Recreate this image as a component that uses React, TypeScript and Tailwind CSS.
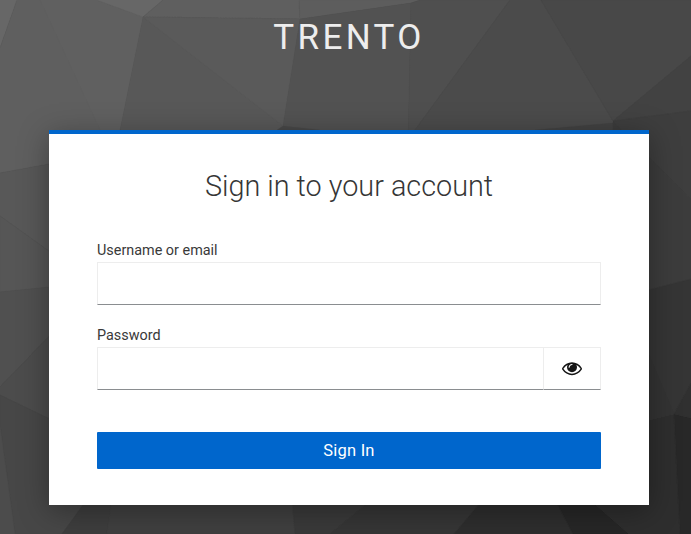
const facets: [string, string][] = [
  ['0,0 17,0 0,48', '#676767'],
  ['17,0 97,0 143,17 120,130 116,152 0,173 0,48', '#5f5f5f'],
  ['40,0 97,0 143,17 120,130 100,130', '#606060'],
  ['97,0 163,0 143,17', '#676767'],
  ['163,0 299,0 300,19 143,17', '#5f5f5f'],
  ['143,17 300,19 283,126 283,150 116,150', '#585858'],
  ['143,17 300,19 283,126', '#5a5a5a'],
  ['299,0 420,0 411,3 300,19', '#5d5d5d'],
  ['300,19 411,3 408,150 283,150 283,126', '#525252'],
  ['411,3 420,0 510,0 415,130 415,150 408,150', '#4f4f4f'],
  ['510,0 541,0 613,121 613,150 415,150 415,130', '#4b4b4b'],
  ['541,0 691,0 691,56 613,121', '#484848'],
  ['613,121 691,56 691,111', '#424242'],
  ['283,126 320,130 320,150 270,150 277,130', '#484848'],
  ['535,130 613,123 613,150 535,150', '#424242'],
  ['613,121 691,111 691,200', '#3e3e3e'],
  ['613,121 691,200 691,279 613,299', '#3c3c3c'],
  ['0,173 60,162 60,259 0,216', '#585858'],
  ['0,216 60,259 60,286 0,292', '#565656'],
  ['0,292 60,286 60,325 0,387', '#505050'],
  ['0,387 60,325 60,424 0,395', '#4c4c4c'],
  ['0,395 60,424 100,484 62,534 15,534 0,425', '#474747'],
  ['0,425 15,534 0,534', '#4c4c4c'],
  ['62,534 98,484 114,484 107,534', '#3e3e3e'],
  ['107,534 114,484 291,484 295,534', '#404040'],
  ['291,484 391,484 330,534 295,534', '#3a3a3a'],
  ['330,534 391,484 496,484 454,534', '#363636'],
  ['454,534 496,484 547,484 573,534', '#2e2e2e'],
  ['573,534 547,484 572,484 629,534', '#272727'],
  ['572,484 649,420 674,414 680,534 629,534', '#2e2e2e'],
  ['674,414 691,418 691,534 680,534', '#282828'],
  ['613,299 691,279 691,383 674,414 613,429', '#353535'],
  ['649,355 674,414 649,420', '#333333'],
  ['691,383 674,414 691,418', '#303030'],
];

function Backdrop() {
  return (
    <svg className="absolute inset-0 h-full w-full" viewBox="0 0 691 534" aria-hidden="true">
      <rect width="691" height="534" fill="#454545" />
      {facets.map(([points, fill]) => (
        <polygon key={points} points={points} fill={fill} stroke={fill} strokeWidth="0.3" />
      ))}
    </svg>
  );
}

function EyeIcon() {
  return (
    <svg
      className="mb-0.5 h-5 w-5 overflow-visible"
      viewBox="0 0 1792 1792"
      fill="currentColor"
      aria-hidden="true"
    >
      <path d="M1664 960q-152-236-381-353 61 104 61 225 0 185-131.500 316.500t-316.500 131.500-316.500-131.500-131.500-316.500q0-121 61-225-229 117-381 353 133 205 333.500 326.500t434.500 121.500 434.500-121.500 333.500-326.500zm-720-384q0-20-14-34t-34-14q-125 0-214.500 89.500t-89.500 214.500q0 20 14 34t34 14 34-14 14-34q0-86 61-147t147-61q20 0 34-14t14-34zm848 384q0 34-20 69-140 230-376.500 368.500t-499.500 138.500-499.500-139-376.500-368q-20-35-20-69t20-69q140-229 376.500-368t499.500-139 499.500 139 376.500 368q20 35 20 69z" />
    </svg>
  );
}

const inputStyle =
  'h-[43px] min-w-0 flex-1 border border-[#ededed] border-b-[#8a8d90] bg-white px-2 text-base text-[#151515] outline-none';

export default function App() {
  return (
    <div className="relative h-[534px] w-full overflow-hidden bg-[#454545] font-['Roboto',sans-serif]">
      <Backdrop />
      <div className="relative flex flex-col">
        <header className="flex h-[130px] justify-center pt-3">
          <h1 className="pl-[7px] text-[35px] leading-[52px] tracking-[3.4px] text-[#ededed]">TRENTO</h1>
        </header>
        <main className="ml-[49px] h-[375px] w-[600px] border-t-4 border-[#0066cc] bg-white px-12 shadow-[0_6px_28px_rgba(3,3,3,0.34)]">
          <h2 className="pt-[34px] text-center text-[28.8px] font-light leading-[36px] text-[#363636]">
            Sign in to your account
          </h2>
          <form className="flex flex-col pt-9" onSubmit={(e) => e.preventDefault()}>
            <label htmlFor="username" className="h-[22px] text-[14.4px] leading-[21px] text-[#393939]">
              Username or email
            </label>
            <div className="flex">
              <input id="username" className={inputStyle} />
            </div>
            <label htmlFor="password" className="mt-5 h-[22px] text-[14.4px] leading-[21px] text-[#393939]">
              Password
            </label>
            <div className="flex">
              <input id="password" type="password" className={`${inputStyle} border-r-0`} />
              <button
                type="button"
                aria-label="Show password"
                className="flex h-[43px] w-[58px] items-center justify-center border border-[#ededed] border-b-[#8a8d90] text-[#151515]"
              >
                <EyeIcon />
              </button>
            </div>
            <button
              type="submit"
              className="mt-[42px] h-[37px] rounded-[1px] bg-[#0066cc] pt-0.5 text-[16.5px] tracking-[0.2px] text-white"
            >
              Sign In
            </button>
          </form>
        </main>
      </div>
    </div>
  );
}
